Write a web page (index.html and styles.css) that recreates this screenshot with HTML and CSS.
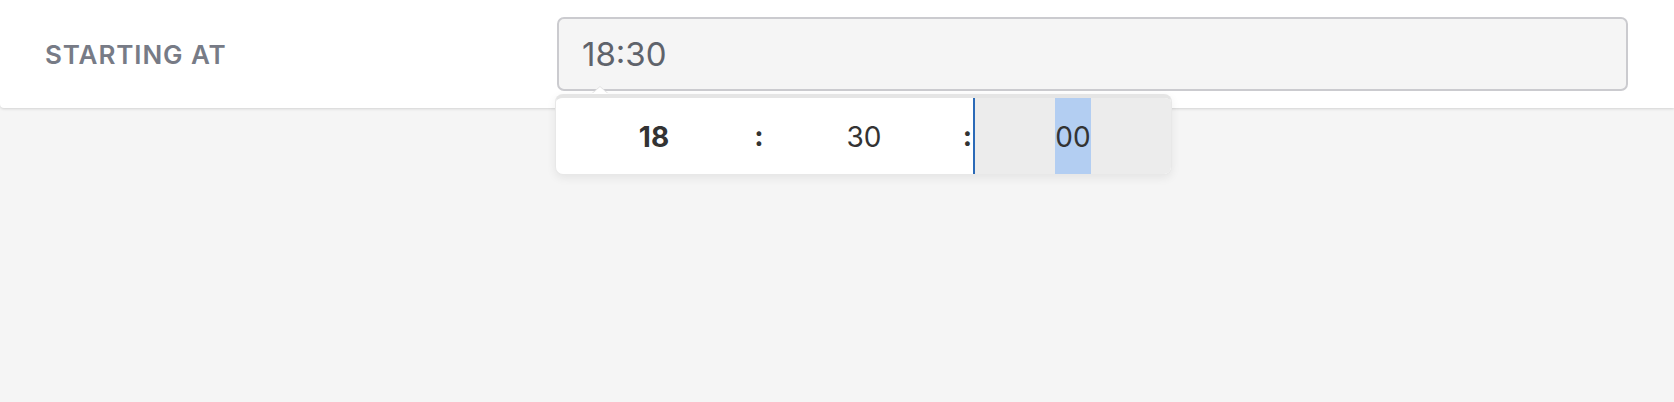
FILE: index.html
```html
<!DOCTYPE html>
<html lang="en">
<head>
<meta charset="utf-8">
<title>Starting at</title>
<link rel="stylesheet" href="styles.css">
</head>
<body>
  <div class="card">
    <div class="label">STARTING AT</div>
    <div class="field">
      <div class="input">18:30</div>
      <div class="arrow"></div>
      <div class="picker">
        <div class="col hour">18</div>
        <div class="colon">:</div>
        <div class="col minute">30</div>
        <div class="colon colon-b">:</div>
        <div class="caret"></div>
        <div class="col second"><span class="sel">00</span></div>
      </div>
    </div>
  </div>
</body>
</html>
```

FILE: styles.css
```css
html, body {
  margin: 0;
  padding: 0;
}
body {
  background: #f5f5f5;
  height: 402px;
  overflow: hidden;
  font-family: Inter, "Noto Sans", sans-serif;
}
.card {
  height: 108px;
  box-sizing: border-box;
  background: #ffffff;
  display: flex;
  align-items: center;
  padding: 0 46px 0 45px;
  border-bottom-left-radius: 4px;
  box-shadow: 0 1px 3px rgba(0, 0, 0, 0.14);
  position: relative;
}
.label {
  width: 512px;
  flex: none;
  font-size: 26px;
  font-weight: 600;
  letter-spacing: 0.9px;
  color: #777b86;
  line-height: 1;
  padding-top: 1px;
}
.field {
  flex: 1;
  position: relative;
}
.input {
  height: 74px;
  box-sizing: border-box;
  border: 2px solid #cbcbcf;
  border-radius: 7px;
  background: #f5f5f5;
  padding-left: 23px;
  display: flex;
  align-items: center;
  font-size: 33px;
  font-weight: 400;
  color: #5f636b;
}
.arrow {
  position: absolute;
  left: 35px;
  top: 70px;
  width: 0;
  height: 0;
  border-left: 8px solid transparent;
  border-right: 8px solid transparent;
  border-bottom: 7px solid #ffffff;
  z-index: 3;
  filter: drop-shadow(0 -1px 0 #e2e2e2);
}
.picker {
  position: absolute;
  left: -2px;
  top: 77px;
  width: 617px;
  box-sizing: border-box;
  height: 81px;
  display: flex;
  background: #ffffff;
  border: 1px solid #e8e8e8;
  border-top: 4px solid #e5e5e5;
  border-radius: 8px;
  box-shadow: 0 3px 10px rgba(0, 0, 0, 0.07);
  overflow: hidden;
  z-index: 2;
  color: #333333;
  font-size: 28px;
}
.col {
  width: 196px;
  flex: none;
  display: flex;
  align-items: center;
  justify-content: center;
  padding-top: 2px;
  box-sizing: border-box;
}
.hour {
  font-weight: 700;
}
.colon {
  width: 14px;
  flex: none;
  display: flex;
  align-items: center;
  justify-content: center;
  font-weight: 700;
}
.colon-b {
  width: 11px;
}
.caret {
  width: 2px;
  flex: none;
  background: #2b6ab7;
}
.second {
  flex: 1;
  background: #ececec;
  padding-top: 0;
  align-items: stretch;
}
.sel {
  background: #b3cef2;
  display: flex;
  align-items: center;
  padding-top: 2px;
}
```
